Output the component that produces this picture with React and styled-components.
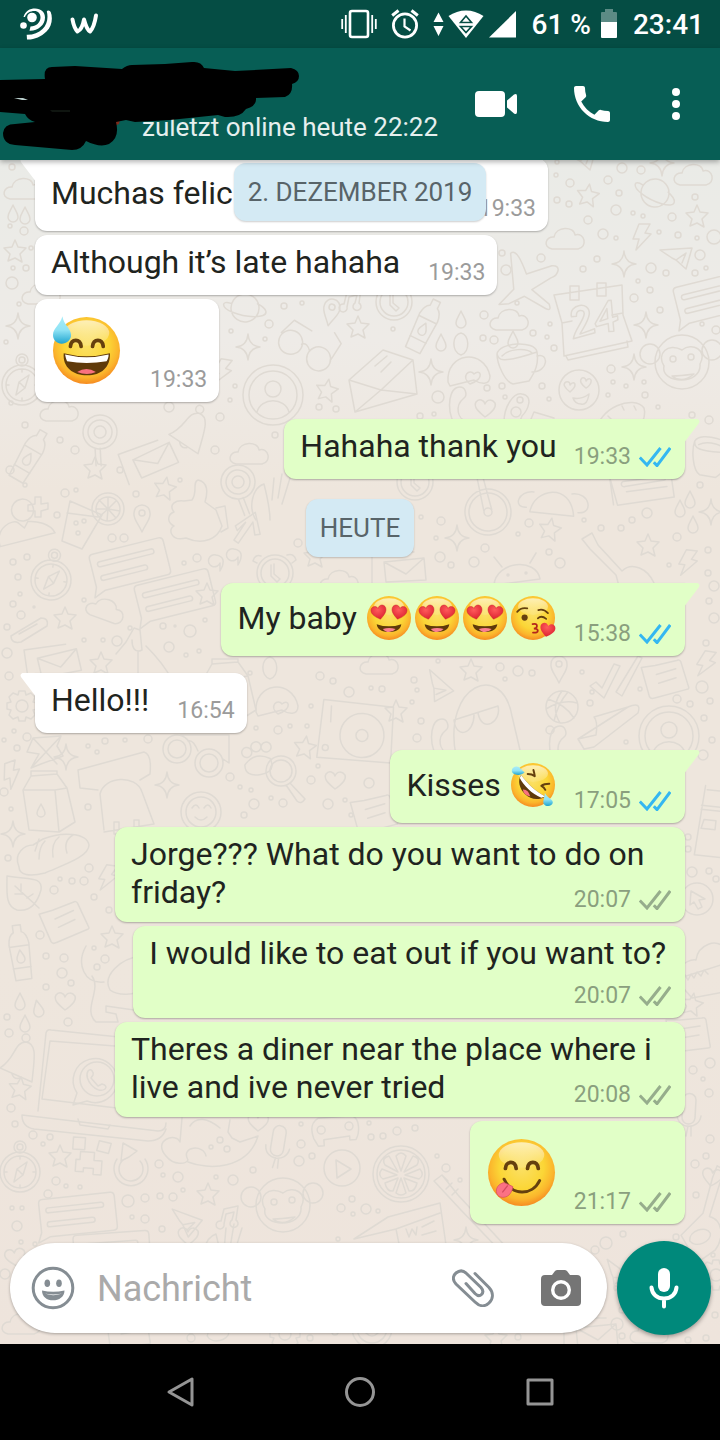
import React from "react";
import styled, { createGlobalStyle, css } from "styled-components";

const GlobalStyle = createGlobalStyle`
  *, *::before, *::after { box-sizing: border-box; }
  body {
    margin: 0;
    background: #000;
    font-family: Roboto, "Noto Sans", sans-serif;
    -webkit-font-smoothing: antialiased;
  }
  h1, p, ol { margin: 0; padding: 0; }
  button { font: inherit; }
`;

/* ---------- page frame ---------- */

const Screen = styled.div`
  display: flex;
  flex-direction: column;
  min-height: 100vh;
`;

const IconButton = styled.button`
  display: flex;
  align-items: center;
  justify-content: center;
  flex: none;
  width: ${(p) => p.$width || 48}px;
  height: ${(p) => p.$height || 48}px;
  padding: 0;
  border: 0;
  background: none;
  color: inherit;
  cursor: pointer;
`;

/* ---------- status bar ---------- */

const StatusBar = styled.div`
  display: flex;
  align-items: center;
  justify-content: space-between;
  height: 48px;
  padding: 0 16px 0 20px;
  background: #054d44;
  color: #fff;
  font-size: 28px;
  font-weight: 500;
  line-height: 32px;
`;

const StatusGroup = styled.div`
  display: flex;
  align-items: center;
  gap: ${(p) => p.$gap}px;
`;

const Percent = styled.span`
  margin: 2px 10px 0 16px;
`;

const Clock = styled.time`
  margin: 2px 0 0 16px;
`;

function PodcastIcon() {
  return (
    <svg width="32" height="32" viewBox="0 0 32 32" fill="#fff" aria-hidden="true">
      <circle cx="12" cy="9.500" r="4.800" />
      <circle cx="3.500" cy="17.500" r="3.300" />
      <path d="M3.500 9C5 3 10 .500 15 .500 21 .500 25 4 25 9.500 25 17 18 23 9.500 22.700L10.500 18.500C16 18.500 20.500 14.500 20.500 9.500 20.500 5.500 18 3 14.500 3 10 3 6.500 5 5 9z" />
      <path d="M26.800 3.500Q27 2.500 28.500 2.500T30.700 4C33 10 32 18 26.500 23.500 21 29 14 31.800 7 31.500L6.700 26.800C13 27 18.500 25 22.500 21 27 16.500 28.500 10 26.800 3.500z" />
    </svg>
  );
}

function WIcon() {
  return (
    <svg width="29" height="22" viewBox="0 0 29 22" fill="none" stroke="#fff" strokeWidth="4" strokeLinecap="round" strokeLinejoin="round" aria-hidden="true">
      <path d="M2.500 6.500C3.500 12 5 16 7.500 18.500 11 17 13 12 14 6.500 15.500 12 17 17 20 18.500 23.500 15 25 9 26 2.500" />
    </svg>
  );
}

function VibrateIcon() {
  return (
    <svg width="36" height="30" viewBox="0 0 36 30" fill="none" stroke="#fff" aria-hidden="true">
      <rect x="9" y="2" width="18" height="26" rx="2" strokeWidth="2.600" />
      <path d="M1.200 10v10M34.800 10v10M4.800 6v18M31.200 6v18" strokeWidth="1.800" />
    </svg>
  );
}

function AlarmIcon() {
  return (
    <svg width="28" height="30" viewBox="0 0 28 30" fill="none" stroke="#fff" aria-hidden="true">
      <circle cx="14" cy="16.500" r="11.600" strokeWidth="2.800" />
      <path d="M1.200 6.500 7.500 1.500M26.800 6.500 20.500 1.500" strokeWidth="3" />
      <path d="M13.500 9.500v8l6 4" strokeWidth="2.200" />
    </svg>
  );
}

function WifiIcon() {
  return (
    <svg width="51" height="30" viewBox="0 0 51 30" fill="#fff" aria-hidden="true">
      <path d="M.500 13 5.500 3.500 10.500 13zM.500 17h10l-5 10z" />
      <path d="M15.500 7C26 -.500 40-.500 50.500 7L33 29z" />
      <path d="M27.500 13.500h11L33 7zM27.500 17.500h11L33 23.500z" stroke="#054d44" strokeWidth="1.600" />
      <path d="M26 15.500h14" stroke="#fff" strokeWidth="1.500" />
    </svg>
  );
}

function SignalIcon() {
  return (
    <svg width="27" height="28" viewBox="0 0 27 28" fill="#fff" aria-hidden="true">
      <path d="M0 27.500 27 1v26.500z" />
    </svg>
  );
}

function BatteryIcon() {
  return (
    <svg width="16" height="30" viewBox="0 0 16 30" fill="#fff" aria-hidden="true">
      <path d="M0 4q0-1 1-1h3V0h8v3h3q1 0 1 1v10H0z" opacity=".35" />
      <path d="M0 13h16v15q0 1-1 1H1q-1 0-1-1z" />
    </svg>
  );
}

/* ---------- chat header ---------- */

const Header = styled.header`
  position: relative;
  z-index: 2;
  display: flex;
  align-items: center;
  height: 112px;
  padding-right: 8px;
  background: #075e55;
  color: #fff;
  box-shadow: 0 2px 5px rgba(0, 0, 0, 0.3);
`;

const Contact = styled.div`
  position: relative;
  display: flex;
  flex: 1;
  flex-direction: column;
  justify-content: flex-end;
  min-width: 0;
  height: 100%;
  padding: 0 0 17px 142px;
`;

const LastSeen = styled.p`
  color: #e6efee;
  font-size: 26px;
  line-height: 32px;
  white-space: nowrap;
`;

const Redaction = styled.svg`
  position: absolute;
  top: 0;
  left: 0;
  width: 300px;
  height: 112px;
`;

/* ---------- conversation ---------- */

const Chat = styled.main`
  position: relative;
  display: flex;
  flex: 1;
  flex-direction: column;
  justify-content: space-between;
  overflow: hidden;
  background: linear-gradient(#eaebe7 0, #eeebe7 180px, #eee6dd 330px, #eee6dd 800px, #eee4dc 100%);
`;

const WallpaperArt = styled.svg`
  position: absolute;
  inset: 0;
  width: 100%;
  height: 100%;
`;

const Messages = styled.ol`
  position: relative;
  display: flex;
  flex-direction: column;
  gap: 4px;
  margin-top: -2px;
  padding: 0 35px;
  list-style: none;
`;

const Row = styled.li`
  display: flex;
  justify-content: ${(p) => (p.$sent ? "flex-end" : "flex-start")};
  margin-top: ${(p) => (p.$first ? 13 : 0)}px;
`;

const DayRow = styled.li`
  display: flex;
  justify-content: center;
  margin: 16px 0 9px;
`;

const DayPill = styled.span`
  padding: 0 14px;
  border-radius: 12px;
  background: #d4eaf4;
  box-shadow: 0 1px 2px rgba(0, 0, 0, 0.2);
  color: #586469;
  font-size: 26px;
  line-height: 58px;
  white-space: nowrap;
`;

const FloatingDay = styled.div`
  position: absolute;
  top: 3px;
  left: 0;
  right: 0;
  display: flex;
  justify-content: center;
`;

const Bubble = styled.article`
  position: relative;
  display: ${(p) => (p.$layout === "wrap" ? "flow-root" : "flex")};
  flex-direction: ${(p) => (p.$layout === "stacked" ? "column" : "row")};
  align-items: flex-start;
  justify-content: space-between;
  gap: ${(p) => (p.$layout === "stacked" ? 10 : p.$sent ? 17 : 28)}px;
  max-width: 570px;
  min-width: ${(p) => p.$minWidth || 0}px;
  min-height: 60px;
  padding: 8px ${(p) => (p.$sent ? 14 : 12)}px 8px 16px;
  border-radius: 12px;
  background: ${(p) => (p.$sent ? "#e1ffc7" : "#fff")};
  box-shadow: 0 1px 2px rgba(0, 0, 0, 0.28);
  color: #1f2420;
  font-size: 32px;
  line-height: 38px;
  ${(p) =>
    p.$tail &&
    css`
      border-top-${p.$sent ? "right" : "left"}-radius: 0;
    `}
`;

const TailShape = styled.svg`
  position: absolute;
  top: 0;
  ${(p) => (p.$sent ? "right" : "left")}: -15px;
  width: 16px;
  height: 24px;
  fill: ${(p) => (p.$sent ? "#e1ffc7" : "#fff")};
`;

const lineHeights = { jumbo: 87, emoji: 54 };

const Text = styled.p`
  display: ${(p) => (p.$layout === "wrap" ? "inline" : "flex")};
  align-items: center;
  min-height: ${(p) => lineHeights[p.$size] || 38}px;
  padding-right: ${(p) => (p.$layout === "stacked" ? 5 : 0)}px;
  white-space: ${(p) => (p.$layout === "wrap" ? "normal" : "pre")};
`;

const Meta = styled.footer`
  display: flex;
  align-items: center;
  align-self: flex-end;
  gap: 8px;
  float: ${(p) => (p.$floating ? "right" : "none")};
  margin-top: ${(p) => (p.$floating ? 13 : p.$size === "emoji" ? 29 : 0)}px;
  color: ${(p) => (p.$sent ? "#8a9f7e" : "#9b9b9b")};
  font-size: 23px;
  line-height: 28px;
`;

const EmojiArt = styled.svg`
  display: block;
  flex: none;
  width: ${(p) => p.$size}px;
  height: ${(p) => p.$size}px;
  margin: 0 2px;
  overflow: visible;
`;

function Ticks({ read }) {
  return (
    <svg width="32" height="20" viewBox="0 0 32 20" fill="none" stroke={read ? "#34b7f1" : "#96ad8c"} strokeWidth="3" role="img" aria-label={read ? "Gelesen" : "Zugestellt"}>
      <path d="M.800 10.500 8 18 21.500 1M14.800 15.300 18 18.600 31.200 1" />
    </svg>
  );
}

/* ---------- emoji ---------- */

const Happy = () => (
  <g fill="none" stroke="#65400e" strokeWidth="5.500" strokeLinecap="round">
    <path d="M26 44q1-9 8-9t8 9M59 44q1-9 8-9t8 9" />
  </g>
);

const HeartEye = ({ x, r }) => (
  <path
    transform={`translate(${x} 36) rotate(${r})`}
    d="M0 17C-10 10-18 3-17-6c1-9 13-11 17-2 4-9 16-7 17 2C18 3 10 10 0 17z"
    fill="url(#emoji-heart)"
    stroke="#c81e2b"
    strokeWidth="1"
  />
);

const emojiFaces = {
  sweat: {
    label: "Lächelndes Gesicht mit Schweißtropfen",
    art: (
      <>
        <Happy />
        <path d="M16 54q34 9 69 0c1 21-13 33-34 33S14 75 16 54z" fill="#5f3a0a" />
        <path d="M18 56q32 8 65 0c0 4-1 7-3 10q-30 5-59 0-2-4-3-10z" fill="#fff" />
        <path d="M36 82q14-9 28 0-13 6-28 0z" fill="#f9727f" />
        <path d="M14-1C11 12 0 16 0 27c0 8 6 13 13 13s14-5 14-13C27 17 16 12 14-1z" fill="url(#emoji-drop)" />
      </>
    ),
  },
  love: {
    label: "Gesicht mit herzförmigen Augen",
    art: (
      <>
        <HeartEye x={27} r={-12} />
        <HeartEye x={73} r={12} />
        <path d="M22 64q28 10 56 0c-1 11-12 18-28 18S23 75 22 64z" fill="#5f3a0a" />
        <path d="M36 75q14-5 29 0-6 7-15 7t-14-7z" fill="#fb8090" />
      </>
    ),
  },
  kiss: {
    label: "Kuss zuwerfendes Gesicht",
    art: (
      <>
        <circle cx="31" cy="49" r="7" fill="#65400e" />
        <path d="M14 36q9-11 23-8M61 51q8-8 19 1M62 32q12-4 22 7" fill="none" stroke="#65400e" strokeWidth="4" strokeLinecap="round" />
        <path d="M49 64q10-2 10 4 0 5-7 6 9 0 9 5 0 5-11 4" fill="none" stroke="#b3251b" strokeWidth="4" strokeLinecap="round" />
        <path transform="translate(83 76) rotate(12)" d="M0 17C-10 10-18 3-17-6c1-9 13-11 17-2 4-9 16-7 17 2C18 3 10 10 0 17z" fill="url(#emoji-heart)" />
      </>
    ),
  },
  rofl: {
    label: "Sich vor Lachen wälzendes Gesicht",
    art: (
      <>
        <g fill="none" stroke="#65400e" strokeWidth="4.500" strokeLinecap="round" strokeLinejoin="round">
          <path d="M38 25q10 0 16 5-1-7-3-14M87 47q-12 0-18 5 6 3 9 9" />
        </g>
        <path d="M23 27c15 20 31 36 55 49-14 9-33 8-46-5S14 39 23 27z" fill="#5f3a0a" />
        <path d="M23 27c15 20 31 36 55 49l-9 3C47 70 28 50 20 34z" fill="#fff" />
        <path d="M27 60q12-1 17 16-16-3-17-16z" fill="#f9727f" />
        <path d="M31 21C23 29 12 28 5 24-1 19 2 9 12 8c8-1 10 7 19 13z" fill="url(#emoji-drop)" />
        <path d="M77 68C76 81 72 85 74 92c3 8 20 8 21-2 1-8-12-10-18-22z" fill="url(#emoji-drop)" />
      </>
    ),
  },
  yum: {
    label: "Sich die Lippen leckendes Gesicht",
    art: (
      <>
        <Happy />
        <path d="M24 60c11 25 42 25 53 2" fill="none" stroke="#65400e" strokeWidth="4.500" strokeLinecap="round" />
        <path d="M24 65c-9 2-13 9-11 16 3 8 13 7 18 3 4-4 6-9 6-13z" fill="#fb7184" stroke="#d64a60" strokeWidth="1" />
        <path d="M29 70 22 79" stroke="#d64a60" strokeWidth="2" strokeLinecap="round" />
      </>
    ),
  },
};

const DefsHolder = styled.svg`
  position: absolute;
  width: 0;
  height: 0;
`;

function EmojiDefs() {
  return (
    <DefsHolder aria-hidden="true">
      <defs>
        <radialGradient id="emoji-face" cx="50%" cy="42%" r="60%">
          <stop offset="0" stopColor="#fbe066" />
          <stop offset=".55" stopColor="#fbd636" />
          <stop offset=".8" stopColor="#fbb52c" />
          <stop offset="1" stopColor="#f5831f" />
        </radialGradient>
        <linearGradient id="emoji-shine" x1="0" y1="0" x2="0" y2="1">
          <stop offset="0" stopColor="#fff" stopOpacity=".65" />
          <stop offset="1" stopColor="#fff" stopOpacity=".1" />
        </linearGradient>
        <radialGradient id="emoji-heart" cx="45%" cy="30%" r="70%">
          <stop offset="0" stopColor="#ff5b5b" />
          <stop offset="1" stopColor="#dc2130" />
        </radialGradient>
        <linearGradient id="emoji-drop" x1="0" y1="0" x2="0" y2="1">
          <stop offset="0" stopColor="#a8ecf7" />
          <stop offset=".5" stopColor="#8fe3f5" />
          <stop offset="1" stopColor="#1ea4cf" />
        </linearGradient>
      </defs>
    </DefsHolder>
  );
}

function Emoji({ name, size = 44 }) {
  const face = emojiFaces[name];
  return (
    <EmojiArt $size={size} viewBox="0 0 100 100" role="img" aria-label={face.label}>
      <circle cx="50" cy="50" r="50" fill="url(#emoji-face)" />
      <ellipse cx="50" cy="24" rx="34" ry="19" fill="url(#emoji-shine)" />
      {face.art}
    </EmojiArt>
  );
}

/* ---------- wallpaper doodles, each drawn around its own centre ---------- */

const ring = (r, x = 0, y = 0) => `M${x - r} ${y}a${r} ${r} 0 1 0 ${2 * r} 0a${r} ${r} 0 1 0 ${-2 * r} 0`;

const doodles = {
  star: "M0-11 3-4 11-3 5 3 7 11 0 7-7 10-5 3-11-3-3-4z",
  sparkle: "M0-13Q1-1 12 0 1 1 0 13-1 1-12 0-1-1 0-13z",
  cloud: "M-14 9C-24 7-20-4-12-3-10-14 8-14 9-5 19-8 22 7 12 9z",
  drop: "M0-8C2-3 5 0 5 4A5 5 0 0 1-5 4C-5 0-2-3 0-8z",
  heart: "M0 9C-6 4-12-1-9-6-6-10-1-8 0-4 2-9 7-9 10-5 12 0 6 5 0 9z",
  bolt: "M-3-13 8-13 3-4 9-3-6 13-3 2-9 2z",
  plane: "M-16-7 16-9 10 12 0 3-4 1zM0 3 10-4 6 6",
  planet: ring(14) + "M-13-7C-22-12-24-5-13 2S20 15 20 7C20 4 17 1 13-2",
  pin: "M0 14C-4 5-9 1-8-5A8 8 0 0 1 8-5C9 1 4 5 0 14z" + ring(3, 0, -5),
  bubble: "M-36 14-40 24-28 19 36 19Q40 19 40 15L40-15Q40-19 36-19L-32-19Q-36-19-36-15zM-27-10H26a2 2 0 0 1 0 5H-27a2 2 0 0 1 0-5zM-27 4H16a2 2 0 0 1 0 5H-27a2 2 0 0 1 0-5z",
  note: "M-24-14-20 16Q-19 19-15 18L18 14Q21 14 20 11L16-14Q15-17 12-16L-10-14zM-10-5 10-8M-9 4 9 1",
  compass: ring(20) + ring(16) + ring(6, 0, -25) + ring(3, 0, -25) + "M-3-3 7-10 3 3-6 10zM-3-3 3 3M0-16v3M0 13v3M-16 0h3M13 0h3",
  clock: ring(18) + ring(14) + "M-1-9V1L5 6 2 9-4 3V-8M-14-17q-6-2-8 5l4 2M12-18q7-2 9 5l-4 3",
  person: ring(30) + ring(24) + ring(8, 0, -6) + "M-16 17C-12 2 12 2 16 17",
  user: ring(11, 0, -14) + "M-26 20C-30 0-10-6-6-2L0 4 4-2C12-2 26 2 30 12z",
  calendar: "M-38-28 30-38 31-8 40 18-28 33-30 0zM-30 0-20-2M20-8 31-10M-26 33-24 37 36 24 35 18M-22-37h9v14h-9zM5-40h9v13h-9z",
  twentyfour: "M-20-7C-22-20 0-22-2-8-4 0-10 6-13 11L2 7 2 11-20 15C-18 6-8-2-7-9-7-14-15-14-15-7zM18-20 3 2 4 5 16 3V11H21V2L26 0V-4L21-3V-20zM16-12V-2L8 0z",
  monkey: ring(27) + ring(10, -32, -8) + ring(10, 30, -12) + ring(3, -9, -3) + ring(3, 9, -5) + "M0-12C-14-20-26-8-18 4-22 22 20 24 18 2 26-12 10-20 0-12zM-10 14Q0 22 12 12-2 14-10 14z",
  smiley: ring(20) + ring(15) + "M-9-4q4-6 7 0M3-4q4-6 7 0M-6 5q6 6 12 0",
  lovesmiley: ring(20) + "M-9 2C-14-2-17-6-13-8-10-9-9-7-9-5-7-8-4-8-4-5-4-2-7 0-9 2zM7-2C2-6 0-9 3-12 6-13 7-10 7-9 9-12 13-12 12-8 12-6 9-3 7-2zM-6 8Q2 10 10 4 8 16 2 14-4 14-6 8z",
  bottle: "M-8 28-10-8Q-9-18-4-20V-27H4V-20Q9-18 10-8L8 28zM-10-6H10M-9 16H9" + "M0-2C2 2 4 4 4 7A4 4 0 0 1-4 7C-4 4-2 2 0-2z",
  cup: "M-22-10C-20-22 16-24 18-12-18 0-20-4-22-10-22 0-14 18-6 20L10 17C16 8 20 0 18-12M18-8C30-12 30 8 13 8M-17-8C-10-16 8-16 13-11",
  airplane: "M-14-28C-8-32-4-20 0-6L26-12C36-12 32-2 24 0L4 10 20 26Q22 34 16 30L-4 16-20 22-30 22-14 8z",
  envelope: "M-34 0 0-30 30-20 34 14-28 32zM-34 0-2 10 30-20M-28 32-2 10 34 14M-8-14 4-24M-2-8 8-18",
  mail: "M-28-16H14M-28-16V16M-16-6 24-10 26 12-14 14zM-16-6 6 6 24-10",
  glasses: ring(12, -16, 4) + ring(12, 16, 10) + "M-5 2Q0-2 5 6M-28-2-20-18 0-14M28 6 32-12 22-20",
  thumb: "M-8 20C-24 24-26 10-20 8-28 4-26-4-20-6-26-14-18-18-10-17L-2-18C4-26-2-36 4-38 14-36 14-26 11-16L22-8 28 8C24 20 10 28-8 20zM22-10 31-12 34 10 27 14",
  arrow: "M-12 4 4-14 14 6 9 8 4-4-5 20-10 18-3-2-9 8z",
  plus: "M-3-10H3L3-3 10-4V2L3 4 3 10H-3V4L-10 4V-2L-3-3z",
  drink: "M-18-16 14-2-6 32-26 24zM-21-4 10 0" + ring(2, -12, 6) + ring(2, -4, 4) + ring(2, -10, 16),
  lemon: ring(16) + ring(12) + "M0 0V-12M0 0 8-8M0 0 12 2M0 0 8 9M0 0-1 12M0 0-9 8M0 0-12 0M0 0-9-9",
  bigLemon: ring(28) + ring(24) + "M0-3-5-18Q0-24 5-18zM3-2 12-18Q20-16 16-9zM4 1 19-5Q24 1 18 5zM3 4 16 9Q14 18 8 17zM0 4 5 19Q0 23-5 19zM-3 4-16 9Q-14 18-8 17zM-4 1-19-5Q-24 1-18 5zM-3-2-12-18Q-20-16-16-9z",
  gear: ring(6) + "M-3-15H3L4-11 9-13 13-9 11-4 15-3V3L11 4 13 9 9 13 4 11 3 15H-3L-4 11-9 13-13 9-11 4-15 3V-3L-11-4-13-9-9-13-4-11z",
  wheel: ring(23) + ring(19) + ring(4) + "M-4-2-6-34M4-2 0-34",
  taco: "M-22 12C-20-12 16-22 22 12zM-26 8C-40 10-36-8-20-8M26 8C42 8 36-14 18-10",
  book: "M-36-6 24-18 30 10-26 22zM-36-6-30 22M-22-2 18-10a2 2 0 0 1 0 4L-20 3a2 2 0 0 1-2-5zM-18 8 22 0",
  android: "M-22 14C-20-10 20-14 24 8zM-14-4-22-14M14-8 20-18" + ring(1, -8, 4) + ring(1, 10, 2),
  guitar: "M-36-36-26-42-20-30 4-4C14-14 30-6 36 8L38 30H6L-2 0-28-26z",
  paw: ring(5, -8, -8) + ring(5, 2, -12) + ring(5, 12, -10) + "M-12 4Q0-8 14 2 18 16 2 16-14 16-12 4z",
  magnifier: ring(15) + ring(11) + "M9 12 24 28Q20 34 16 30L5 14",
  carton: "M-24-12-16-26 10-28 20-14 28 20 12 30-18 28zM-24-12H8L20-14M8-12 12 30M-16-26V-31H10V-28" + "M-6 2C-4 6-2 8-2 11A4 4 0 0 1-10 11C-10 8-8 6-6 2z",
  backpack: "M-20 32-24-4C-20-22 12-24 18-6L30 26-20 34M-26-8-44-10-46-28 20-46Q28-44 26-24L16-18M-10 24h5v12h-5zM10 22h5v10h-5z",
  binoculars: ring(14, -16, -6) + ring(9, -16, -6) + ring(14, 16, 8) + ring(9, 16, 8) + "M-5-14Q0-16 5-4M-12-20H36V8L30 4",
  ghost: "M-26 36C-40-36 20-60 30-4L38 30M-28 0 16-14M-28 0C-26 20-8 14-8-5M-4-7C0 14 20 2 16-14",
  ball: ring(16) + "M-14-8Q4-2 12 11M-8 14Q-4-4 6-15M-16 2Q0-8 15-4M-2 16Q-12 0 0-16",
  shoe: "M-30 14 20-18Q34-24 30-12L-14 22-24 24zM-30 14-12 10Q-10-4-14-8L20-18",
  ticks: "M-22 2-16-2-10 4 2-20 8-18-8 14zM4 8 26-28 30-26 10 12z",
  lighthouse: "M-6-34-10 36H20M-4-30H16M-8-14H14M-8-10H14M-4 0H8v9H-6z",
  cursor: ring(16) + "M-6-8 8 0 2 1 5 8 1 10-3 3-7 6z",
  bread: "M-34 12C-40-2-28-10-20-10L-10-16C10-24 34-22 36-10 36 2 10 10-8 18-24 22-34 20-34 12zM-18-4-14-16M-14 4Q-14-8-8-14M0 2Q-2-12 6-18M14-2Q10-14 20-20",
  leaf: "M-18-16C4-12 18-16 16-2 12 12 4 20-8 18-20 14-18 0-18-16zM-10-6 14 16M-4 0V-8M2 6 8 2M-2 2H-10",
  elephant: "M-26-44C-36-26-28-6-8-8M30-34C8-32-10-14-2 0 6 6 24 6 30-2M-20-14C-10 0-30 20-16 32H6L4 24-6 22V16L22 20V10",
  bell: "M-20 8C-4-2-6-18 6-18 18-16 14 0 12 22zM-8 14Q-6 20 0 18" + ring(4, 6, -22),
  laptop: "M-50 38-42-40Q-41-44-37-43L70-32M-46 26-38-32 66-24M-46 26 70 40M-66 42 70 58Q78 58 78 50M-66 42Q-66 54-54 56L60 68Q74 68 78 56M-10 46-8 52 20 56 22 52",
  phoneBubble: ring(17) + "M-20 14-24 26-10 22A22 22 0 1 0-20 14zM-9-8C-6-12-3-6-4-4L-6-1 1 7 5 5C9 6 10 8 8 10 0 16-14 0-9-8z",
  pixel: "M-16-22H-4V-10H-16zM10-20 22-18 20-8 8-10zM-8-8H6V0H14V14H6V8H-4V12H-12V0H-8z",
  refresh: "M14-8A17 17 0 1 1-14-8M9-6A12 12 0 1 1-8-7M-8-24-10-6-2-10 6-16z",
  cloudy: "M-50 0C-64-16-40-24-36-14L-34-38M-50 0C-42 10-30 8-28 4-36-10-12-12-10 0M-28 6C-8 14 32 14 42-20L30-16 24-14 16-18 12-24 14-36M-26-30C-20-40-8-38 4-28",
  mic: "M-6-12A6 6 0 0 1 7-12L6 6A6 6 0 0 1-7 5zM-12 2C-12 18 10 18 12 4M-1 14-3 24M2 14V24",
  play: ring(18) + "M-6-8 9 1-5 10z",
  music: "M-5 9A4 4 0 1 1-8 6L-5-6 9-9 7 5A4 4 0 1 1 3 5L5-3-3-1z",
  car: "M-22 10C-26-4-20-8-16-10H18C26-6 24 8 20 14H14V10L-12 12V18H-18z" + ring(4, -14, 2) + ring(4, 14, 0),
  cupcake: "M-26 0C-30-12-12-20-8-18-6-34 14-40 20-30M-24 0 20-14M-26 4-12 20 20 14M-22 2l3-5 3 5 3-6 3 4 3-6 4 4 3-6 4 4",
  brush: "M-36-34-28-40-12-20 38 34 34 40-10-6zM-28-40-22-34M-24-26-18-32M-18-20-12-26",
  news: "M-50 14-16-8 36-22 42 20M-50 14-8 4-4 24M-8 4 36-12M2 4 5 12 8 4 12 10 13 2M18 2 30-4M18 10 32 6",
  record: "M-30-34 40-30 40 26-34 24zM-22-28V-12" + ring(22, 10, 0) + ring(6, 10, 0) + ring(3, -26, 14),
  pie: "M-20 10C-22-20 16-24 22 4 22 14 12 12 6 8L-18 14zM2 12C-8 4 2-4 6 2 12-4 18 6 2 12z",
  egg: "M0-11C8-10 10 8 0 11-10 8-9-10 0-11z",
  phone: "M-4-18C6-22 8-10 4-8-6 0-2 14 6 14 10 20 4 26-2 22-14 10-12-14-4-18z",
  gamepad: "M-16 14C-16-2-6-16 2-14 14-12 8 2 2 8L-2 18M8 18 14 4 34 10" + ring(3, 0, -8) + ring(5, -4, 4),
  donut: "M-26 20C-24-4 12-18 22-4 24 2 20 12 18 16M-6 18C-4 8 12 6 10 14M-14 4-10 8M0-6 2-2M12-6 14-2",
  lollipop: ring(17) + ring(12) + ring(6) + "M-2 17 2 34M3 16 7 33",
  dog: "M-34 4-24-8-16-22-10-20-8 0C-16 4-18-4-18-10M-12 2V30M-4-4C8 8 16 18 22 30",
  jack: "M-12-14 16-16 12-6 18 4-4 12-14 16-6 2-18 0zM-12-14 12 12M16-16-12 14",
  clip: "M-18 6 12-12Q20-12 18-4L-8 12Q-18 14-18 6zM-10 4 8-6",
  quotes: "M-4-2A6 6 0 1 1-8-10Q4-8-4 6zM14-8A6 6 0 1 1 10-16Q22-14 14 0z",
  hand: "M-14 20C-22 8-18-12-6-16M-6-16Q0 8 0 20M4-22 2 0M12-26 8-2M20-22 12 4",
};

/* [doodle, x, y, rotation] */
const placed = [
  ["cloud", 24, 190, 0], ["drop", 13, 213, 0], ["drop", 25, 215, 0], ["star", 15, 251, 0], ["cloud", 42, 295, 0],
  ["sparkle", 18, 326, 0], ["compass", 22, 385, 0], ["planet", 245, 308, -10], ["pin", 331, 312, 12], ["sparkle", 248, 347, 0],
  ["glasses", 307, 344, 20], ["star", 358, 327, 0], ["person", 273, 395, 0], ["star", 327, 390, 10], ["cloud", 60, 412, 0],
  ["bolt", 222, 372, 10], ["music", 352, 298, 0], ["plane", 580, 158, 0], ["star", 588, 195, 8], ["planet", 655, 193, 5],
  ["cloud", 694, 176, 0], ["star", 697, 216, 0], ["sparkle", 662, 163, 0], ["cloud", 566, 240, 0], ["bolt", 642, 237, 0],
  ["sparkle", 624, 264, 0], ["plane", 676, 257, 0], ["airplane", 527, 280, -5], ["calendar", 592, 323, 0], ["twentyfour", 592, 322, -5],
  ["bubble", 712, 298, -14], ["sparkle", 646, 325, 0], ["clock", 394, 302, 0], ["bottle", 425, 325, 26], ["drop", 461, 319, 0],
  ["cloud", 510, 321, 0], ["drop", 513, 339, 0], ["drop", 441, 342, 0], ["egg", 461, 344, 0], ["pie", 468, 372, 0],
  ["cup", 519, 364, 0], ["monkey", 682, 362, 0], ["envelope", 383, 380, 0], ["sparkle", 431, 372, 0], ["sparkle", 634, 367, 0],
  ["lovesmiley", 579, 390, 0], ["phone", 460, 406, 0], ["heart", 485, 408, 0], ["gamepad", 520, 408, 0], ["donut", 622, 412, 0],
  ["cup", 712, 458, 20], ["hand", 270, 500, 0], ["lollipop", 238, 482, -8], ["clock", 415, 482, 0], ["wheel", 488, 512, -8],
  ["taco", 553, 502, 6], ["book", 645, 485, 4], ["drop", 680, 508, 0], ["drop", 690, 499, 0], ["drop", 693, 524, 0],
  ["sparkle", 457, 538, 0], ["sparkle", 711, 512, 0], ["star", 550, 529, 10], ["star", 648, 545, 0], ["android", 516, 571, 0],
  ["guitar", 618, 575, 0], ["bolt", 688, 563, 6], ["quotes", 224, 565, 0], ["clock", 275, 573, 0], ["star", 315, 556, 0],
  ["mail", 400, 568, 0], ["star", 207, 594, 0], ["cloud", 340, 582, 0], ["user", 24, 524, -6], ["plus", 38, 507, 0],
  ["drink", 88, 517, 0], ["lemon", 108, 509, 0], ["pin", 142, 518, 0], ["thumb", 194, 518, 0], ["star", 165, 488, 10],
  ["arrow", 248, 525, 14], ["compass", 51, 580, 8], ["bubble", 128, 565, -14], ["bubble", 173, 596, -14], ["cloud", 106, 611, 20],
  ["star", 65, 618, 0], ["clip", 29, 630, 0], ["mail", 54, 662, -8], ["star", 101, 663, 0], ["dog", 150, 650, 0],
  ["carton", 228, 690, 0], ["egg", 270, 668, 0], ["pie", 276, 702, 0], ["gear", 22, 706, 0], ["record", 352, 735, 3],
  ["star", 305, 747, 8], ["jack", 45, 752, 0], ["bolt", 12, 775, -20], ["sparkle", 66, 757, 0], ["sparkle", 167, 785, 0],
  ["binoculars", 193, 755, 0], ["paw", 256, 759, -10], ["magnifier", 281, 771, 0], ["heart", 335, 780, 0], ["carton", 47, 802, 0],
  ["backpack", 124, 798, 0], ["smiley", 201, 812, 0], ["star", 471, 670, 0], ["pin", 559, 669, 0], ["note", 667, 678, -8],
  ["bolt", 706, 664, 10], ["plane", 436, 686, 45], ["ghost", 482, 720, 0], ["ball", 562, 707, 0], ["shoe", 608, 725, 0],
  ["person", 669, 736, 0], ["ticks", 612, 684, 0], ["star", 396, 711, 0], ["cloud", 380, 665, 0], ["phone", 442, 738, 0],
  ["phone", 560, 745, 0], ["note", 376, 813, -8], ["lighthouse", 708, 820, 6], ["cursor", 697, 899, 0], ["cupcake", 704, 978, 0],
  ["star", 692, 1004, 10], ["note", 690, 1034, 0], ["mic", 689, 1112, 0], ["sparkle", 13, 834, 0], ["bread", 53, 855, 0],
  ["leaf", 25, 892, 0], ["note", 66, 921, -16], ["star", 112, 937, 0], ["bottle", 20, 952, -8], ["elephant", 112, 990, 0],
  ["heart", 65, 1001, 0], ["drop", 20, 1001, 0], ["drop", 38, 1008, -12], ["drop", 25, 1023, 0], ["bell", 20, 1060, 0],
  ["star", 20, 1088, 6], ["laptop", 88, 1073, 0], ["phoneBubble", 97, 1079, 0], ["compass", 20, 1172, 0], ["star", 60, 1156, 0],
  ["pixel", 88, 1160, 4], ["refresh", 131, 1167, 0], ["cloudy", 216, 1156, 0], ["mic", 278, 1144, 6], ["play", 342, 1168, 0],
  ["monkey", 283, 1205, 0], ["bubble", 76, 1215, -6], ["plane", 184, 1222, 24], ["music", 229, 1215, 0], ["star", 208, 1194, 0],
  ["car", 335, 1127, -4], ["bolt", 108, 878, 8], ["bigLemon", 401, 1174, 0], ["heart", 712, 1177, 8], ["guitar", 704, 1215, 60],
  ["brush", 470, 1215, 0], ["news", 404, 1225, 0], ["heart", 258, 1122, 0], ["heart", 15, 1257, -10], ["bubble", 110, 1252, -4],
  ["hand", 222, 1250, 0], ["sparkle", 466, 1240, 0], ["egg", 700, 1237, 70], ["gear", 716, 1275, 0], ["plane", 615, 1275, 40],
  ["mail", 592, 1334, 0], ["cloud", 650, 1334, 0], ["cloud", 22, 1325, 0], ["smiley", 372, 1328, 0], ["gear", 285, 1334, 0],
  ["egg", 218, 1334, 80], ["star", 496, 1338, 0], ["note", 130, 1330, 0], ["heart", 188, 1236, 0], ["note", 660, 462, 10],
  ["mail", 150, 460, -20], ["star", 95, 468, 0], ["cloud", 250, 455, 0], ["lollipop", 100, 432, 10], ["bottle", 30, 455, 30],
  ["bell", 190, 430, 10],
];

/* [x, y, radius] */
const dots = [
  [10, 226, 2], [24, 231, 4], [31, 248, 2], [13, 268, 2], [12, 283, 6], [19, 304, 2], [6, 342, 2], [26, 268, 3], [12, 167, 3],
  [284, 306, 3], [302, 303, 2], [269, 324, 4], [265, 339, 2], [231, 331, 2], [319, 407, 3], [336, 409, 3], [220, 417, 4], [235, 386, 2],
  [230, 400, 2], [11, 403, 2], [169, 407, 5], [557, 162, 2], [556, 175, 2], [570, 183, 4], [557, 200, 3], [569, 204, 3],
  [608, 180, 4], [622, 168, 5], [641, 170, 4], [619, 193, 3], [616, 210, 5], [588, 220, 4], [633, 213, 2], [603, 234, 5],
  [616, 238, 2], [643, 216, 2], [672, 217, 4], [695, 197, 3], [659, 232, 2], [678, 235, 3], [697, 238, 2], [714, 237, 7],
  [541, 258, 4], [506, 270, 5], [502, 253, 3], [583, 269, 3], [597, 259, 3], [651, 268, 5], [666, 273, 3], [700, 255, 5],
  [706, 268, 2], [695, 273, 3], [638, 281, 2], [650, 290, 3], [634, 298, 4], [660, 310, 3], [517, 303, 2], [484, 315, 4],
  [393, 329, 2], [483, 338, 3], [494, 340, 4], [550, 324, 2], [533, 333, 3], [547, 337, 2], [554, 348, 3], [611, 369, 4],
  [613, 382, 2], [626, 386, 2], [644, 382, 2], [608, 395, 2], [645, 395, 3], [658, 407, 2], [487, 388, 3], [502, 386, 3],
  [505, 397, 2], [542, 386, 3], [549, 399, 2], [438, 397, 6], [420, 416, 3], [434, 414, 2], [692, 415, 3], [709, 420, 4],
  [716, 330, 4], [702, 324, 2], [421, 517, 2], [441, 521, 4], [436, 538, 2], [485, 548, 4], [474, 562, 5], [451, 565, 3],
  [440, 557, 5], [529, 523, 4], [518, 534, 2], [584, 520, 2], [601, 528, 3], [647, 513, 5], [632, 520, 3], [621, 528, 3],
  [549, 552, 3], [560, 563, 5], [677, 537, 4], [669, 565, 2], [708, 550, 3], [708, 573, 3], [714, 586, 5], [709, 601, 3],
  [714, 618, 5], [706, 643, 3], [500, 667, 4], [518, 671, 5], [532, 673, 3], [438, 661, 2], [65, 493, 4], [76, 490, 2],
  [136, 494, 3], [57, 515, 3], [25, 485, 2], [112, 538, 4], [124, 538, 4], [13, 562, 3], [27, 557, 3], [18, 577, 3], [20, 594, 2],
  [13, 604, 3], [21, 615, 4], [7, 627, 3], [34, 607, 1], [84, 600, 2], [197, 558, 4], [184, 563, 2], [298, 543, 4], [130, 628, 2],
  [163, 626, 3], [175, 626, 1], [190, 631, 6], [205, 620, 2], [84, 640, 2], [103, 640, 2], [117, 641, 5], [169, 647, 5],
  [186, 655, 2], [199, 651, 2], [7, 653, 5], [9, 676, 4], [320, 676, 4], [333, 681, 3], [349, 692, 5], [311, 706, 2], [250, 673, 2],
  [256, 728, 2], [278, 730, 4], [290, 726, 2], [307, 726, 2], [27, 737, 4], [14, 731, 2], [4, 740, 2], [17, 748, 3], [88, 746, 2],
  [97, 752, 2], [105, 741, 3], [125, 740, 2], [148, 739, 4], [230, 777, 4], [240, 787, 2], [251, 790, 2], [311, 780, 4],
  [318, 766, 2], [254, 804, 5], [244, 815, 3], [283, 803, 4], [271, 798, 2], [328, 804, 5], [345, 800, 2], [351, 815, 2],
  [88, 807, 3], [4, 792, 4], [11, 809, 2], [371, 688, 2], [382, 689, 3], [414, 680, 3], [417, 690, 2], [412, 702, 2], [421, 721, 3],
  [417, 738, 4], [505, 679, 2], [582, 672, 2], [592, 692, 2], [590, 703, 3], [550, 730, 4], [626, 742, 2], [640, 689, 2],
  [677, 699, 4], [690, 704, 3], [702, 687, 6], [710, 701, 3], [712, 740, 3], [703, 755, 5], [704, 718, 3], [369, 783, 5],
  [692, 872, 5], [709, 871, 3], [716, 879, 3], [688, 837, 3], [688, 849, 3], [8, 858, 3], [89, 868, 4], [60, 879, 2], [72, 881, 3],
  [84, 881, 4], [54, 890, 4], [94, 897, 3], [109, 910, 3], [40, 935, 4], [46, 956, 3], [64, 958, 4], [62, 973, 5], [71, 983, 3],
  [46, 987, 3], [97, 967, 3], [105, 959, 4], [94, 948, 2], [68, 1022, 4], [7, 1017, 3], [9, 1033, 4], [11, 1108, 4], [15, 1124, 3],
  [33, 1135, 4], [50, 1137, 3], [43, 1144, 2], [128, 1201, 6], [145, 1198, 4], [160, 1196, 3], [173, 1197, 4], [183, 1190, 2],
  [178, 1177, 5], [163, 1175, 2], [159, 1164, 4], [216, 1177, 2], [233, 1180, 5], [253, 1170, 3], [220, 1140, 3], [227, 1149, 3],
  [211, 1147, 2], [301, 1144, 4], [299, 1161, 5], [312, 1156, 3], [301, 1124, 2], [132, 1217, 2], [145, 1219, 4], [162, 1229, 3],
  [56, 1181, 4], [66, 1186, 2], [80, 1187, 2], [48, 1194, 4], [12, 1208, 2], [22, 1208, 2], [17, 1226, 5], [352, 1199, 3],
  [341, 1208, 4], [353, 1214, 2], [693, 1070, 4], [710, 1063, 5], [703, 1079, 2], [709, 1093, 4], [710, 1139, 4], [706, 1156, 3],
  [695, 1164, 4], [696, 1195, 3], [371, 1137, 3], [383, 1136, 3], [397, 1131, 4], [415, 1128, 3], [369, 1123, 2], [446, 1168, 4],
  [437, 1156, 2], [460, 1180, 2], [366, 1209, 5], [378, 1211, 2], [5, 1274, 5], [21, 1242, 2], [35, 1244, 2], [606, 1243, 6],
  [623, 1234, 3], [595, 1250, 4], [676, 1237, 3], [713, 1255, 2], [617, 1324, 6], [622, 1310, 3], [622, 1336, 3], [688, 1340, 3],
  [706, 1338, 3], [715, 1315, 3], [191, 1338, 4], [310, 1338, 3], [335, 1332, 3], [518, 1337, 3], [338, 1239, 2], [616, 1288, 2],
  [60, 440, 3], [75, 450, 4], [120, 470, 3], [180, 480, 2], [215, 450, 4], [275, 435, 3], [25, 425, 3], [10, 470, 4], [700, 485, 3],
];

function Wallpaper() {
  return (
    <WallpaperArt viewBox="0 160 720 1184" preserveAspectRatio="xMidYMin slice" fill="none" stroke="#dfdad3" strokeWidth="1.500" strokeLinejoin="round" strokeLinecap="round" aria-hidden="true">
      {placed.map(([name, x, y, turn]) => (
        <path key={`${name}-${x}-${y}`} d={doodles[name]} transform={`translate(${x} ${y}) rotate(${turn})`} />
      ))}
      {dots.map(([x, y, r]) => (
        <circle key={`${x}-${y}`} cx={x} cy={y} r={r} />
      ))}
    </WallpaperArt>
  );
}

/* ---------- composer ---------- */

const Composer = styled.form`
  position: relative;
  display: flex;
  align-items: center;
  gap: 10px;
  margin-top: 17px;
  padding: 0 9px 9px 10px;
`;

const Field = styled.div`
  display: flex;
  flex: 1;
  align-items: center;
  min-width: 0;
  height: 90px;
  padding: 0 2px 0 19px;
  border-radius: 45px;
  background: #fff;
  box-shadow: 0 1px 3px rgba(0, 0, 0, 0.3);
`;

const Input = styled.input`
  flex: 1;
  min-width: 0;
  height: 60px;
  margin-left: 20px;
  padding: 2px 0 0;
  border: 0;
  outline: 0;
  background: none;
  color: #1f2420;
  font: 36px/44px Roboto, "Noto Sans", sans-serif;

  &::placeholder {
    color: #aaa;
    opacity: 1;
  }
`;

const VoiceButton = styled(IconButton)`
  border-radius: 50%;
  background: #00897b;
  box-shadow: 0 2px 4px rgba(0, 0, 0, 0.35);
`;

const NavBar = styled.nav`
  display: flex;
  justify-content: center;
  height: 96px;
  background: #000;
  color: #959595;
`;

const NavButton = styled.button`
  display: flex;
  align-items: center;
  justify-content: center;
  width: 25%;
  padding: 0;
  border: 0;
  background: none;
  color: inherit;
`;

const NavGlyph = ({ children }) => (
  <svg width="32" height="32" viewBox="0 0 32 32" fill="none" stroke="currentColor" strokeWidth="3" strokeLinejoin="round" aria-hidden="true">
    {children}
  </svg>
);

/* ---------- content ---------- */

const messages = [
  { text: "Muchas felic", time: "19:33", size: "emoji", tail: true, minWidth: 513 },
  { text: "Although it’s late hahaha", time: "19:33" },
  { emoji: ["sweat"], time: "19:33", size: "jumbo" },
  { text: "Hahaha thank you", time: "19:33", sent: true, read: true, tail: true, first: true },
  { day: "HEUTE" },
  { text: "My baby ", emoji: ["love", "love", "love", "kiss"], time: "15:38", size: "emoji", sent: true, read: true, tail: true, first: true },
  { text: "Hello!!!", time: "16:54", tail: true, first: true },
  { text: "Kisses ", emoji: ["rofl"], time: "17:05", size: "emoji", sent: true, read: true, tail: true, first: true },
  { text: "Jorge??? What do you want to do on friday?", time: "20:07", sent: true, layout: "wrap" },
  { text: "I would like to eat out if you want to?", time: "20:07", sent: true, layout: "stacked" },
  { text: "Theres a diner near the place where i live and ive never tried", time: "20:08", sent: true, layout: "wrap" },
  { emoji: ["yum"], time: "21:17", size: "jumbo", sent: true },
];

function Message({ text, emoji = [], time, size, sent, read, tail, first, layout = "inline", minWidth }) {
  return (
    <Row $sent={sent} $first={first}>
      <Bubble $sent={sent} $tail={tail} $layout={layout} $minWidth={minWidth}>
        {tail && (
          <TailShape $sent={sent} viewBox="0 0 16 24" aria-hidden="true">
            <path d={sent ? "M0 0H13.500Q16.500 1 15 4L1 22.500V24H0z" : "M16 0H2.500Q-.500 1 1 4L15 22.500V24H16z"} />
          </TailShape>
        )}
        <Text $layout={layout} $size={size}>
          {text}
          {emoji.map((name, i) => (
            <Emoji key={i} name={name} size={size === "jumbo" ? 67 : 44} />
          ))}
        </Text>
        <Meta $sent={sent} $floating={layout === "wrap"} $size={size}>
          <time>{time}</time>
          {sent && <Ticks read={read} />}
        </Meta>
      </Bubble>
    </Row>
  );
}

export default function App() {
  return (
    <Screen>
      <GlobalStyle />
      <EmojiDefs />
      <StatusBar>
        <StatusGroup $gap={18}>
          <PodcastIcon />
          <WIcon />
        </StatusGroup>
        <StatusGroup $gap={0}>
          <StatusGroup $gap={14}>
            <VibrateIcon />
            <AlarmIcon />
            <StatusGroup $gap={5}>
              <WifiIcon />
              <SignalIcon />
            </StatusGroup>
          </StatusGroup>
          <Percent>61 %</Percent>
          <BatteryIcon />
          <Clock>23:41</Clock>
        </StatusGroup>
      </StatusBar>

      <Header>
        <Contact>
          <LastSeen>zuletzt online heute 22:22</LastSeen>
          <Redaction viewBox="0 48 300 112" aria-hidden="true">
            <path d="M112 116h9l-2 8-5 2z" fill="#7d2b1c" />
            <path d="M0 80 45 79Q43 67 52 67L75 66 122 69Q127 65 132 65L165 64 192 62Q201 61 204 68L235 71 291 68Q299 70 299 76 299 82 292 84 293 94 285 97L256 98Q257 106 246 109 240 118 225 117L218 115 170 120 135 122 126 120 116 122Q120 138 109 144 100 148 86 141 82 150 72 150L15 145Q3 144 3 133 4 124 15 124L35 122Q28 120 25 114L0 112z" />
            <path d="M14 98 23 98 28 100 22 100z" fill="#b9cfcc" />
            <path d="M50 110.500H70V111.500H52z" fill="#1f2a20" />
          </Redaction>
        </Contact>
        <IconButton $width={96} $height={96} aria-label="Videoanruf">
          <svg width="42" height="26" viewBox="0 0 42 26" fill="currentColor" aria-hidden="true">
            <rect width="30" height="26" rx="4" />
            <path d="M32 9.500 39 3.500Q42 2 42 5V21Q42 24 39 22.500L32 16.500z" />
          </svg>
        </IconButton>
        <IconButton $width={96} $height={96} aria-label="Anrufen">
          <svg width="36" height="36" viewBox="3 3 18 18" fill="currentColor" aria-hidden="true">
            <path d="M6.620 10.790c1.440 2.830 3.760 5.140 6.590 6.590l2.200-2.200c.27-.27.67-.36 1.020-.24 1.120.37 2.330.57 3.570.57.55 0 1 .45 1 1V20c0 .55-.45 1-1 1-9.390 0-17-7.610-17-17 0-.55.45-1 1-1h3.500c.55 0 1 .45 1 1 0 1.250.2 2.450.57 3.570.11.35.03.74-.25 1.020l-2.200 2.200z" />
          </svg>
        </IconButton>
        <IconButton $width={72} $height={96} aria-label="Weitere Optionen">
          <svg width="8" height="32" viewBox="0 0 8 32" fill="currentColor" aria-hidden="true">
            <circle cx="4" cy="4" r="4" />
            <circle cx="4" cy="16" r="4" />
            <circle cx="4" cy="28" r="4" />
          </svg>
        </IconButton>
      </Header>

      <Chat>
        <Wallpaper />
        <Messages>
          {messages.map((m, i) =>
            m.day ? (
              <DayRow key={i}>
                <DayPill>{m.day}</DayPill>
              </DayRow>
            ) : (
              <Message key={i} {...m} />
            )
          )}
        </Messages>
        <FloatingDay>
          <DayPill>2. DEZEMBER 2019</DayPill>
        </FloatingDay>
        <Composer onSubmit={(e) => e.preventDefault()}>
          <Field>
            <IconButton type="button" aria-label="Emoji">
              <svg width="44" height="44" viewBox="0 0 44 44" fill="#858d93" aria-hidden="true">
                <circle cx="22" cy="22" r="19.800" fill="none" stroke="#858d93" strokeWidth="3" />
                <ellipse cx="16.300" cy="17.300" rx="2.800" ry="3.800" />
                <ellipse cx="28" cy="17.300" rx="2.800" ry="3.800" />
                <path d="M11 24.500Q22 27 33.500 24.500C33.500 31 28 34.300 22 34.300S11 31 11 24.500z" />
                <path d="M14 27.500Q22 29.500 31 27.500 22 31 14 27.500z" fill="#fff" />
              </svg>
            </IconButton>
            <Input type="text" placeholder="Nachricht" aria-label="Nachricht" />
            <IconButton type="button" $width={88} aria-label="Anhängen">
              <svg width="42" height="38" viewBox="0 0 42 38" fill="none" stroke="#858d93" strokeWidth="3" strokeLinecap="round" aria-hidden="true">
                <path d="M23 4.500 37 18.500C42 24 41 30 37 34S27.500 37.500 23 33L4 15C0 10.500 1 6.500 4 4S11 1 14.500 4.500L29 18.500C32 22 31 24 29.500 25.500S25.500 27 23 24.500L14 14.500" />
              </svg>
            </IconButton>
            <IconButton type="button" $width={88} aria-label="Kamera">
              <svg width="40" height="36" viewBox="0 0 40 36" aria-hidden="true">
                <path d="M4 5H11L14 1Q15 0 16.500 0H23.500Q25 0 26 1L29 5H36Q40 5 40 9V32Q40 36 36 36H4Q0 36 0 32V9Q0 5 4 5z" fill="#757575" />
                <circle cx="20" cy="20" r="8.300" fill="none" stroke="#fff" strokeWidth="3.400" />
              </svg>
            </IconButton>
          </Field>
          <VoiceButton type="button" $width={94} $height={94} aria-label="Sprachnachricht">
            <svg width="30" height="42" viewBox="0 0 30 42" fill="none" stroke="#fff" strokeWidth="4" aria-hidden="true">
              <rect x="9" y="1" width="12" height="24" rx="6" fill="#fff" stroke="none" />
              <path d="M2.500 20.500C3 27 8 31.500 15 31.500S27 27 27.500 20.500M15 31.500V39.500" strokeLinecap="round" />
            </svg>
          </VoiceButton>
        </Composer>
      </Chat>

      <NavBar aria-label="Systemnavigation">
        <NavButton aria-label="Zurück">
          <NavGlyph>
            <path d="M5 16 28 3V29z" />
          </NavGlyph>
        </NavButton>
        <NavButton aria-label="Startbildschirm">
          <NavGlyph>
            <circle cx="16" cy="16" r="13.500" />
          </NavGlyph>
        </NavButton>
        <NavButton aria-label="Letzte Apps">
          <NavGlyph>
            <rect x="4" y="4" width="24" height="24" />
          </NavGlyph>
        </NavButton>
      </NavBar>
    </Screen>
  );
}
